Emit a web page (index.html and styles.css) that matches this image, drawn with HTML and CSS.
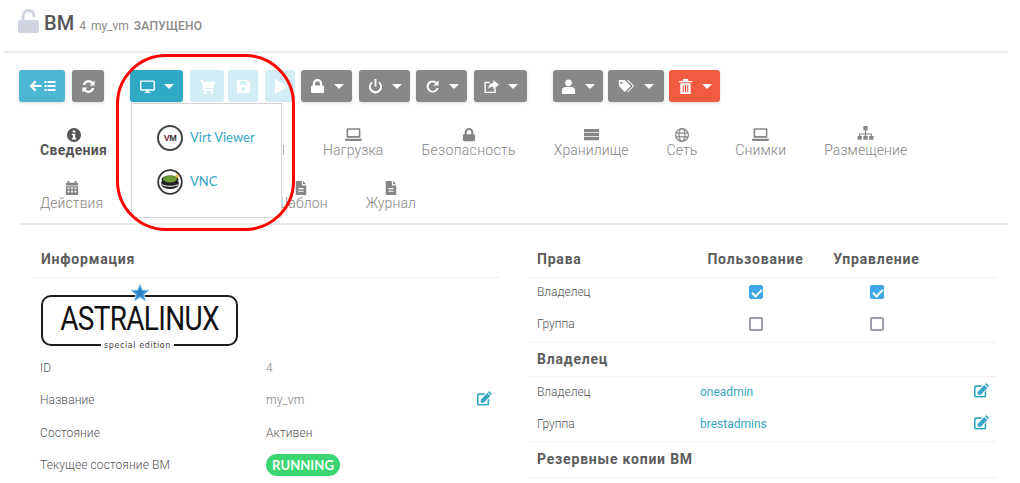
FILE: index.html
```html
<!DOCTYPE html>
<html>
<head>
    <meta charset="UTF-8">
    <title>ВМ 4 my_vm</title>
    <link rel="stylesheet" href="styles.css">
</head>
<body>
    <svg class="sprite" xmlns="http://www.w3.org/2000/svg">
        <symbol id="i-lock" viewBox="0 0 16 16"><path d="M3 7V5a5 5 0 0 1 10 0v2h.5A1.500 1.500 0 0 1 15 8.500v5a1.500 1.500 0 0 1-1.500 1.500h-11A1.500 1.500 0 0 1 1 13.500v-5A1.500 1.500 0 0 1 2.500 7zm2.400 0h5.200V5a2.600 2.600 0 0 0-5.200 0z"/></symbol>
        <symbol id="i-laptop" viewBox="0 0 16 16"><path d="M2.500 2h11A1 1 0 0 1 14.500 3v8h-13V3a1 1 0 0 1 1-1zm.5 1.500v6h10v-6zM0 12h16v.8a1.200 1.200 0 0 1-1.200 1.200H1.200A1.200 1.200 0 0 1 0 12.800z"/></symbol>
        <symbol id="i-monitor" viewBox="0 0 16 16"><path d="M1.500 1.500h13A1.500 1.500 0 0 1 16 3v8a1.500 1.500 0 0 1-1.500 1.500H9.500v1.500h2v1h-7v-1h2v-1.500h-5A1.500 1.500 0 0 1 0 11V3a1.500 1.500 0 0 1 1.500-1.500zm0 1.500v8h13V3z"/></symbol>
        <symbol id="i-info" viewBox="0 0 16 16"><path fill-rule="evenodd" d="M8 0a8 8 0 1 1 0 16A8 8 0 0 1 8 0zM6.500 2.800v2.400h3V2.800zM5.500 6.500v1.800h1.200v3H5.500v1.900h5v-1.900H9.400V6.500z"/></symbol>
        <symbol id="i-calendar" viewBox="0 0 16 16"><path fill-rule="evenodd" d="M3 0h2v2h6V0h2v2h2v3H1V2h2zM1 6h14v10H1zm2 1.500v2h2v-2zm4 0v2h2v-2zm4 0v2h2v-2zM3 11v2h2v-2zm4 0v2h2v-2zm4 0v2h2v-2z"/></symbol>
        <symbol id="i-file" viewBox="0 0 16 16"><path fill-rule="evenodd" d="M2 0h7v5h5v11H2zm8.200 0L14 3.800h-3.800zM5 8v1.300h6V8zm0 3v1.300h6V11z"/></symbol>
        <symbol id="i-server" viewBox="0 0 16 16"><path d="M0 2h16v3.500H0zm0 4.300h16v3.500H0zm0 4.300h16v3.500H0z"/></symbol>
        <symbol id="i-globe" viewBox="0 0 16 16"><circle cx="8" cy="8" r="7.300" fill="none" stroke="currentColor" stroke-width="1.300"/><ellipse cx="8" cy="8" rx="3.300" ry="7.300" fill="none" stroke="currentColor" stroke-width="1.300"/><path d="M1 5.200h14v1.300H1zm0 4.300h14v1.300H1z"/></symbol>
        <symbol id="i-sitemap" viewBox="0 0 16 16"><path d="M6 0h4v4H8.600v3H14v2.500h1.500V13h-4V9.500H13V8H8.600v1.500H10V13H6V9.500h1.400V8H3v1.500h1.500V13h-4V9.500H2V7h5.400V4H6z"/></symbol>
        <symbol id="i-edit" viewBox="0 0 16 16"><path d="M12.800 0 16 3.200l-1.200 1.200-3.200-3.200zM11 2.200l3.200 3.200-7 7H4V9.200zM2.500 2.500H9L7.300 4.200H2.500a.8.800 0 0 0-.8.800v8a.8.800 0 0 0 .8.800h8a.8.800 0 0 0 .8-.8V9.600L13 8v5.500a2 2 0 0 1-2 2H2a2 2 0 0 1-2-2V4.500a2 2 0 0 1 2-2z"/></symbol>
    </svg>

    <div class="page">
        <div class="page-header">
            <svg class="header-lock" viewBox="0 0 21 24"><path class="shackle" d="M5 12V7a5.500 5.500 0 0 1 11 0v1"/><rect y="11" width="21" height="13" rx="2.500"/></svg>
            <h1>ВМ</h1>
            <span class="header-id">4</span>
            <span class="header-name">my_vm</span>
            <span class="header-state">ЗАПУЩЕНО</span>
        </div>

        <div class="toolbar">
            <button class="btn btn-back">
                <svg class="back-icon" viewBox="0 0 26 12"><path d="M0 6l5.500-5.500 1.500 1.500L4.200 5H12v2H4.200L7 10l-1.500 1.500zM15 1h2v2h-2zm3 0h8v2h-8zm-3 4h2v2h-2zm3 0h8v2h-8zm-3 4h2v2h-2zm3 0h8v2h-8z"/></svg>
            </button>
            <button class="btn btn-gray btn-refresh">
                <svg class="icon" viewBox="0 0 16 16"><path d="M2 6.500A6.200 6.200 0 0 1 12.800 3.300L14.500 1.600V7H9.100l2-2A3.800 3.800 0 0 0 4.500 6.500zM14 9.500A6.200 6.200 0 0 1 3.200 12.700L1.500 14.400V9h5.400l-2 2a3.800 3.800 0 0 0 6.600-1.500z"/></svg>
            </button>
            <button class="btn btn-vnc">
                <svg class="icon"><use href="#i-monitor"/></svg>
                <span class="caret"></span>
            </button>
            <button class="btn btn-disabled btn-cart">
                <svg class="icon" viewBox="0 0 16 16"><path d="M0 1h3l.5 2H16l-1.500 6.500H5l.4 1.500H14v1.500H4L1.800 2.500H0z"/><circle cx="5.500" cy="14.500" r="1.500"/><circle cx="12.500" cy="14.500" r="1.500"/></svg>
            </button>
            <button class="btn btn-disabled btn-save">
                <svg class="icon" viewBox="0 0 16 16"><path fill-rule="evenodd" d="M2 1h10l3 3v9a2 2 0 0 1-2 2H3a2 2 0 0 1-2-2V2a1 1 0 0 1 1-1zm2 1.500V6h7V2.500zM8 8.500a2.200 2.200 0 1 0 0 4.400 2.200 2.200 0 0 0 0-4.400z"/></svg>
            </button>
            <button class="btn btn-disabled btn-play">
                <svg class="icon" viewBox="0 0 16 16"><path d="M2 0l14 8-14 8z"/></svg>
            </button>
            <button class="btn btn-gray btn-drop btn-tight">
                <svg class="icon"><use href="#i-lock"/></svg>
                <span class="caret"></span>
            </button>
            <button class="btn btn-gray btn-drop">
                <svg class="icon" viewBox="0 0 16 16"><path d="M7 0h2v8H7zM4.500 2.300v2.200a5 5 0 1 0 7 0V2.300a7 7 0 1 1-7 0z"/></svg>
                <span class="caret"></span>
            </button>
            <button class="btn btn-gray btn-drop btn-tight">
                <svg class="icon" viewBox="0 0 16 16"><path d="M8 1.500a6.500 6.500 0 0 1 4.500 1.800L14.500 1.500V7H9l2-2.200A4.400 4.400 0 1 0 12.400 9.500h2.100A6.500 6.500 0 1 1 8 1.500z"/></svg>
                <span class="caret"></span>
            </button>
            <button class="btn btn-gray btn-drop btn-share">
                <svg class="icon" viewBox="0 0 16 16"><path d="M10 1l6 5-6 5V8C7 8 5.500 8.800 4.500 11c0-4 2-6.500 5.500-7zM1.500 3H6v1.500H2v9h9v-3l1.500-1V15H.5V3z"/></svg>
                <span class="caret"></span>
            </button>
            <button class="btn btn-gray btn-drop btn-user">
                <svg class="icon" viewBox="0 0 16 16"><circle cx="8" cy="4" r="3.600"/><path d="M1 16v-3.500A4 4 0 0 1 5 8.500h6a4 4 0 0 1 4 4V16z"/></svg>
                <span class="caret"></span>
            </button>
            <button class="btn btn-gray btn-drop btn-tags">
                <svg class="tags-icon" viewBox="0 0 20 16"><path fill-rule="evenodd" d="M1 1h7l7 7-7 7-7-7zm3 2a1.300 1.300 0 1 0 0 2.600A1.300 1.300 0 0 0 4 3z"/><path d="M10.500 1H12l7 7-7 7h-1.500l7-7z"/></svg>
                <span class="caret"></span>
            </button>
            <button class="btn btn-red">
                <svg class="icon" viewBox="0 0 16 16"><path fill-rule="evenodd" d="M5.500 0h5l.5 2h4v1.500H1V2h4zM2.500 4.500h11V16h-11zM5 6.500v7.500h1.200V6.500zm2.400 0v7.500h1.200V6.500zm2.400 0v7.500H11V6.500z"/></svg>
                <span class="caret"></span>
            </button>
        </div>

        <div class="tabs">
            <div class="tab tab-active"><svg class="tab-icon"><use href="#i-info"/></svg>Сведения</div>
            <div class="tab tab-covered tab-covered-long"><span class="tab-stem"></span></div>
            <div class="tab"><svg class="tab-icon tab-icon-wide"><use href="#i-laptop"/></svg>Нагрузка</div>
            <div class="tab tab-spaced"><svg class="tab-icon"><use href="#i-lock"/></svg>Безопасность</div>
            <div class="tab"><svg class="tab-icon tab-icon-server"><use href="#i-server"/></svg>Хранилище</div>
            <div class="tab"><svg class="tab-icon"><use href="#i-globe"/></svg>Сеть</div>
            <div class="tab"><svg class="tab-icon tab-icon-wide"><use href="#i-laptop"/></svg>Снимки</div>
            <div class="tab"><svg class="tab-icon tab-icon-wide"><use href="#i-sitemap"/></svg>Размещение</div>
            <div class="tab"><svg class="tab-icon"><use href="#i-calendar"/></svg>Действия</div>
            <div class="tab tab-covered tab-covered-short"></div>
            <div class="tab"><svg class="tab-icon"><use href="#i-file"/></svg>Шаблон</div>
            <div class="tab"><svg class="tab-icon"><use href="#i-file"/></svg>Журнал</div>
        </div>

        <div class="panels">
            <div class="panel">
                <div class="panel-title row-line">Информация</div>
                <div class="logo">
                    <svg class="logo-star" viewBox="0 0 20 20"><path d="M10 0l2.600 6.700 7.200.4-5.600 4.600 1.900 7L10 14.800l-6.100 3.900 1.900-7L.2 7.100l7.200-.4z"/><path class="logo-star-inner" d="M10 4l1.400 4 4.200.2-3.300 2.600 1.100 4.100L10 12.600l-3.400 2.300 1.100-4.100-3.300-2.600 4.200-.2z"/></svg>
                    <span class="logo-name">ASTRALINUX</span>
                    <span class="logo-edition">special edition</span>
                </div>
                <div class="info-rows">
                    <div class="info-row"><span>ID</span><span class="muted">4</span></div>
                    <div class="info-row"><span>Название</span><span class="muted">my_vm</span><svg class="edit"><use href="#i-edit"/></svg></div>
                    <div class="info-row"><span>Состояние</span><span>Активен</span></div>
                    <div class="info-row"><span>Текущее состояние ВМ</span><span><span class="badge">RUNNING</span></span></div>
                </div>
            </div>

            <div class="panel">
                <div class="perm-row panel-title row-line">
                    <span>Права</span><span class="perm-col">Пользование</span><span class="perm-col">Управление</span>
                </div>
                <div class="perm-row perm-first">
                    <span>Владелец</span>
                    <span class="perm-col"><span class="check check-on"></span></span>
                    <span class="perm-col"><span class="check check-on"></span></span>
                </div>
                <div class="perm-row perm-last row-line">
                    <span>Группа</span>
                    <span class="perm-col"><span class="check"></span></span>
                    <span class="perm-col"><span class="check"></span></span>
                </div>
                <div class="panel-title owner-title row-line">Владелец</div>
                <div class="owner-row owner-first"><span>Владелец</span><a href="#">oneadmin</a><svg class="edit"><use href="#i-edit"/></svg></div>
                <div class="owner-row owner-last row-line"><span>Группа</span><a href="#">brestadmins</a><svg class="edit"><use href="#i-edit"/></svg></div>
                <div class="panel-title row-line">Резервные копии ВМ</div>
            </div>
        </div>

        <div class="dropdown">
            <a class="dropdown-item" href="#">
                <span class="round-icon vv-icon"><b>V</b>M</span><span class="item-label">Virt Viewer</span>
            </a>
            <a class="dropdown-item" href="#">
                <svg class="round-icon" viewBox="0 0 26 26"><circle cx="13" cy="13" r="11.800" fill="#fff" stroke="#333" stroke-width="1.800"/><ellipse cx="13" cy="14.500" rx="9" ry="5.500" fill="#222"/><path d="M4.500 15c2 3 15 3 17 0" fill="none" stroke="#fff" stroke-width="1"/><ellipse cx="13" cy="10.500" rx="8.500" ry="4" fill="#222"/><ellipse cx="13" cy="10" rx="7" ry="3.500" fill="#6b9a34"/><circle cx="20" cy="7" r="1.700" fill="#e6c34a"/></svg><span class="item-label">VNC</span>
            </a>
        </div>
        <div class="callout"></div>
    </div>
</body>
</html>
```

FILE: styles.css
```css
* {
    box-sizing: border-box;
    margin: 0;
    padding: 0;
}

html, body {
    height: 100%;
    overflow: hidden;
}

body {
    background-color: #fff;
    color: #666;
    font-family: Roboto, "Liberation Sans", sans-serif;
    font-size: 12px;
}

a {
    color: #36a6c4;
    text-decoration: none;
}

svg {
    fill: currentColor;
}

.sprite {
    display: none;
}

.page {
    position: relative;
    height: 483px;
}

/* header */
.page-header {
    display: flex;
    align-items: baseline;
    height: 53px;
    margin: 0 12px 0 4px;
    padding: 11px 0 0 14px;
    border-bottom: 2px solid #ececec;
}

.header-lock {
    align-self: flex-start;
    flex: none;
    width: 21px;
    height: 24px;
    margin: -2px 5px 0 0;
    color: #d0d3e0;
}

.shackle {
    fill: none;
    stroke: #d0d3e0;
    stroke-width: 3;
}

.page-header h1 {
    font-size: 20px;
    font-weight: 500;
    color: #555;
    margin-right: 5px;
}

.header-id, .header-name, .header-state {
    font-size: 12px;
    color: #8a8a8a;
    margin-right: 5px;
}

.header-state {
    font-weight: 500;
    letter-spacing: 0.2px;
}

/* toolbar */
.toolbar {
    display: flex;
    margin-top: 17px;
    padding-left: 19px;
    height: 32px;
}

.btn {
    display: flex;
    align-items: center;
    justify-content: center;
    height: 32px;
    border: none;
    border-radius: 3px;
    color: #fff;
    box-shadow: 0 1px 3px rgba(0,0,0,0.15);
}

.btn .icon {
    width: 15px;
    height: 15px;
}

.btn-gray {
    background-color: #888;
}

.btn-drop {
    width: 51px;
    margin-left: 7px;
}

.btn-tight {
    margin-left: 6px;
}

.btn-back {
    width: 46px;
    background-color: #4db6d2;
}

.back-icon {
    width: 27px;
    height: 12px;
}

.btn-refresh {
    width: 32px;
    margin-left: 7px;
}

.btn-vnc {
    width: 53px;
    margin-left: 26px;
    background-color: #30a9c5;
}

.btn-disabled {
    background-color: #d2edf4;
    box-shadow: none;
}

.btn-cart {
    width: 34px;
    margin-left: 7px;
}

.btn-save {
    width: 30px;
    margin-left: 4px;
}

.btn-play {
    width: 30px;
    margin-left: 7px;
}

.btn-share {
    width: 53px;
}

.btn-user {
    width: 50px;
    margin-left: 26px;
}

.btn-tags {
    width: 56px;
    margin-left: 5px;
}

.tags-icon {
    width: 17px;
    height: 14px;
}

.btn-red {
    width: 51px;
    margin-left: 5px;
    background-color: #f15b40;
}

.caret {
    width: 0;
    height: 0;
    margin-left: 9px;
    border-top: 5px solid #fff;
    border-left: 5px solid transparent;
    border-right: 5px solid transparent;
}

/* tabs */
.tabs {
    display: flex;
    flex-wrap: wrap;
    column-gap: 38px;
    margin: 26px 12px 0 19px;
    padding-left: 21px;
    height: 97px;
    border-bottom: 2px solid #ececec;
}

.tab {
    display: flex;
    flex-direction: column;
    align-items: center;
    height: 53px;
    font-size: 14px;
    font-weight: 300;
    letter-spacing: 0.1px;
    color: #858585;
    white-space: nowrap;
}

.tab-spaced {
    letter-spacing: 0.3px;
}

.tab-icon {
    width: 14px;
    height: 14px;
    color: #858585;
}

.tab-icon-wide {
    width: 17px;
    height: 17px;
    margin: -2px 0 -1px;
}

.tab-icon-server {
    width: 15px;
    height: 15px;
    margin: -1px 0 0;
}

.tab-active {
    font-weight: 700;
    letter-spacing: 0.3px;
    color: #555;
}

.tab-active .tab-icon {
    color: #555;
}

/* tabs lying under the open menu */
.tab-covered {
    align-items: flex-end;
}

.tab-covered-long {
    width: 140px;
}

.tab-covered-short {
    width: 96px;
}

.tab-stem {
    width: 1px;
    height: 10px;
    margin: 17px 1px 0 0;
    background-color: #aaa;
}

/* panels */
.panels {
    display: grid;
    grid-template-columns: 468px 469px;
    column-gap: 28px;
    padding-left: 32px;
    margin-top: 17px;
}

.panel-title {
    display: flex;
    align-items: center;
    height: 36px;
    padding-left: 9px;
    font-size: 14px;
    font-weight: 700;
    letter-spacing: 0.8px;
    color: #5c5c5c;
    padding-bottom: 2px;
}

.owner-title {
    height: 34px;
}

.row-line {
    border-bottom: 1px solid #f1f1f1;
}

.logo {
    position: relative;
    width: 197px;
    height: 51px;
    margin: 17px 0 0 9px;
    border: 2.500px solid #1c1c1c;
    border-radius: 10px;
    display: flex;
    justify-content: center;
    align-items: center;
}

.logo-name {
    font-size: 28px;
    font-weight: 400;
    letter-spacing: -0.7px;
    color: #111;
    margin-top: -4px;
    transform: scaleY(1.2);
}

.logo-star {
    position: absolute;
    left: 87px;
    top: -14px;
    width: 20px;
    height: 20px;
    color: #4a9fdc;
    stroke: #fff;
    stroke-width: 0.6;
}

.logo-star-inner {
    fill: #2a7fc0;
    stroke: none;
}

.logo-edition {
    position: absolute;
    left: 58px;
    bottom: -7px;
    padding: 0 3px;
    background-color: #fff;
    font-family: "DejaVu Sans", sans-serif;
    font-size: 8px;
    line-height: 10px;
    letter-spacing: 0.6px;
    color: #444;
}

.info-rows {
    margin-top: 6px;
    padding-left: 8px;
}

.info-row {
    display: grid;
    grid-template-columns: 226px 1fr 16px;
    align-items: center;
    height: 32.3px;
    padding-right: 7px;
    font-weight: 300;
    letter-spacing: 0.1px;
    color: #555;
}

.muted {
    color: #808080;
}

.edit {
    width: 15px;
    height: 15px;
    margin-bottom: 4px;
    color: #36a6c4;
}

.badge {
    display: inline-block;
    padding: 0 6px;
    height: 22px;
    line-height: 22px;
    border-radius: 11px;
    background-color: #3bd671;
    color: #fff;
    font-family: Lato, sans-serif;
    font-weight: 700;
    font-size: 13px;
}

.perm-row {
    display: grid;
    grid-template-columns: 158px 121px 121px;
    align-items: center;
    padding-left: 9px;
    font-weight: 300;
    color: #555;
}

.perm-first {
    height: 27px;
}

.perm-last {
    height: 38px;
}

.perm-row.panel-title {
    font-weight: 700;
    color: #5c5c5c;
}

.perm-col {
    text-align: center;
}

.check {
    display: inline-block;
    position: relative;
    vertical-align: middle;
    width: 14px;
    height: 14px;
    border: 2px solid #9c9cab;
    border-radius: 2px;
}

.check-on {
    background-color: #3fa9e8;
    border-color: #3fa9e8;
}

.check-on::after {
    content: "";
    position: absolute;
    left: 3px;
    top: 0;
    width: 4px;
    height: 8px;
    border: solid #fff;
    border-width: 0 2px 2px 0;
    transform: rotate(45deg);
}

.owner-row {
    display: grid;
    grid-template-columns: 163px 1fr 16px;
    align-items: center;
    padding: 0 7px 0 9px;
    font-weight: 300;
    color: #555;
}

.owner-first {
    height: 30px;
}

.owner-last {
    height: 35px;
}

.owner-row a {
    font-weight: 400;
}

/* monitor menu */
.dropdown {
    position: absolute;
    left: 131px;
    top: 103px;
    width: 151px;
    height: 115px;
    padding: 21px 0 0 25px;
    background-color: #fff;
    border: 1px solid #d4d4d4;
}

.dropdown-item {
    display: flex;
    align-items: center;
    gap: 7px;
    height: 26px;
    margin-bottom: 18px;
    font-family: Lato, sans-serif;
    font-size: 13px;
}

.item-label {
    margin-bottom: 2px;
}

.round-icon {
    flex: none;
    width: 26px;
    height: 26px;
}

.vv-icon {
    display: flex;
    align-items: center;
    justify-content: center;
    border: 2px solid #444;
    border-radius: 50%;
    font-family: "Liberation Sans", sans-serif;
    font-size: 9px;
    font-weight: 700;
    color: #333;
    letter-spacing: -0.5px;
}

.vv-icon b {
    color: #7a2a48;
}

.callout {
    position: absolute;
    left: 116px;
    top: 54px;
    width: 179px;
    height: 177px;
    border: 3px solid #f00;
    border-radius: 50px;
}
```
